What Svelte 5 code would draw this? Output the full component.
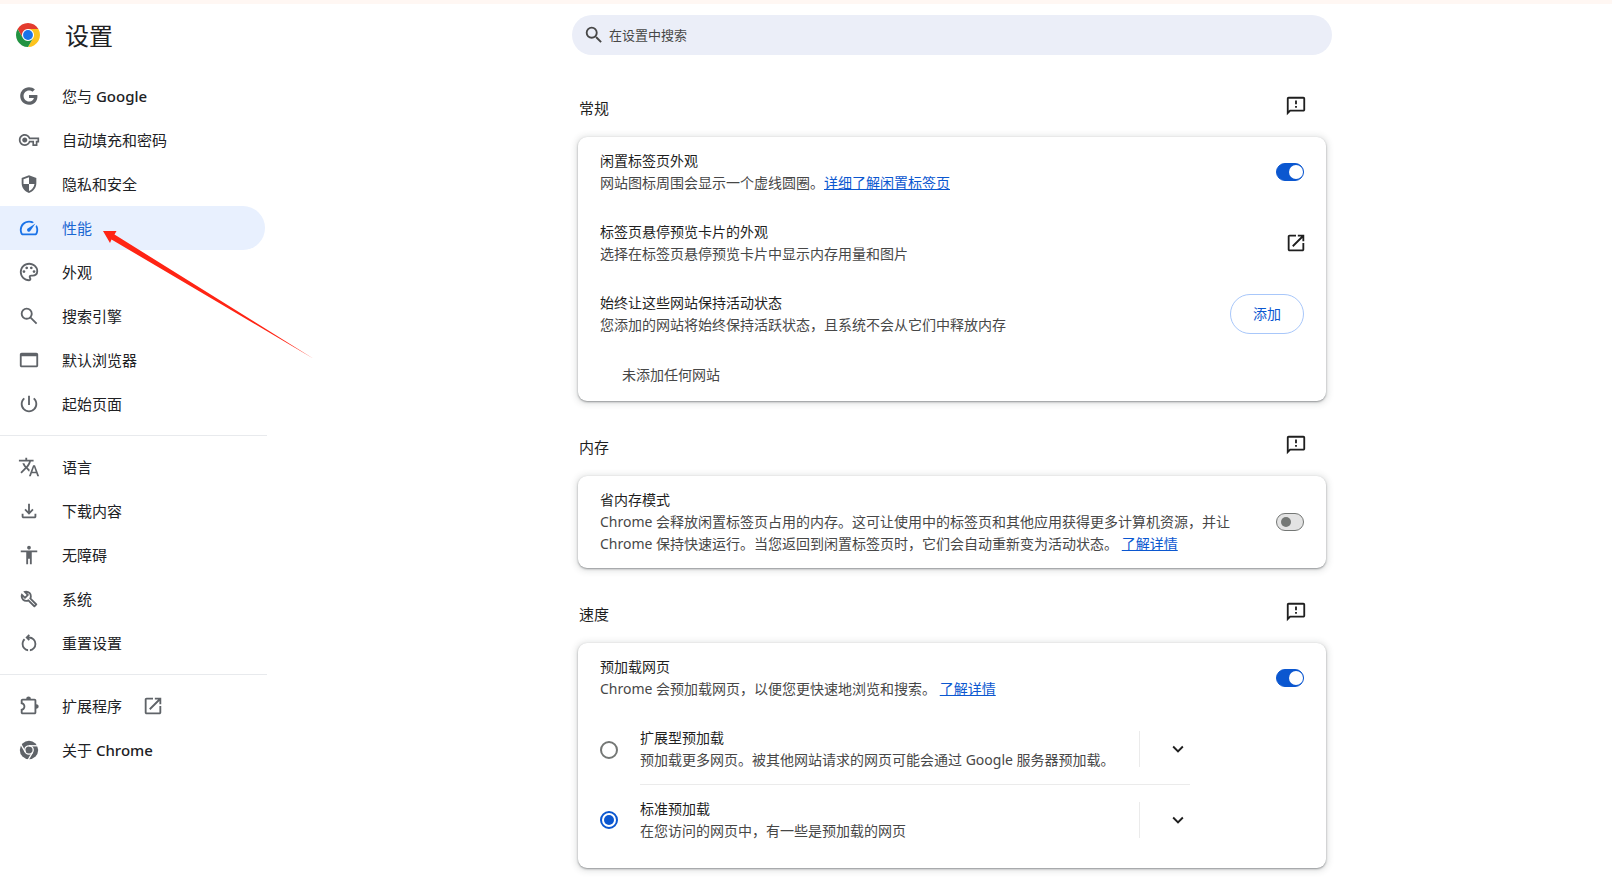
<script lang="ts">
  type NavItem = {
    id: string;
    label: string;
    product?: string;
    icon: string;
    box?: string;
    external?: boolean;
  };

  const symbols = '0 -960 960 960';

  const menu: NavItem[][] = [
    [
      {
        id: 'people',
        label: '您与',
        product: 'Google',
        box: '-1 -1 20 20',
        icon: 'M16.58 8H9v2.75h4.47c-.24 1.2-1.42 3.27-4.47 3.27-2.72 0-4.93-2.25-4.93-5.02S6.28 3.98 9 3.98c1.54 0 2.57.66 3.17 1.22l2.19-2.12C12.97 1.79 11.16 1 9 1 4.58 1 1 4.58 1 9s3.58 8 8 8c4.62 0 7.68-3.25 7.68-7.82 0-.42-.04-.8-.1-1.18z'
      },
      {
        id: 'autofill',
        label: '自动填充和密码',
        box: '-1 -1 26 26',
        icon: 'M22 19h-6v-4h-2.68c-1.14 2.42-3.6 4-6.32 4-3.86 0-7-3.14-7-7s3.14-7 7-7c2.72 0 5.17 1.58 6.32 4H24v6h-2v4zm-4-2h2v-4h2v-2H11.94l-.23-.67C11.01 8.34 9.11 7 7 7c-2.76 0-5 2.24-5 5s2.24 5 5 5c2.11 0 4.01-1.34 4.71-3.33l.23-.67H18v4zM7 15c-1.65 0-3-1.35-3-3s1.35-3 3-3 3 1.35 3 3-1.35 3-3 3z'
      },
      {
        id: 'privacy',
        label: '隐私和安全',
        box: '0 0 24 24',
        icon: 'M12 2.5L4 5.4v5.8c0 4.9 3.4 9.3 8 10.5 4.6-1.2 8-5.6 8-10.5V5.4l-8-2.9zm0 9.5h6c-.5 3.5-2.8 6.5-6 7.6V12H6V6.8l6-2.2V12z'
      },
      {
        id: 'performance',
        label: '性能',
        icon: 'M418-340q24 24 62 23.5t56-27.5l224-336-336 224q-27 18-28.5 55t22.5 61Zm62-460q59 0 113.5 16.5T696-734l-76 48q-33-17-68.5-25.5T480-720q-133 0-226.5 93.5T160-400q0 42 11.5 83t32.5 77h552q23-38 33.5-79t10.5-85q0-36-8.5-70T766-540l48-76q30 47 47.5 100T880-406q1 57-13 109t-41 99q-11 18-30 28t-40 10H204q-21 0-40-10t-30-28q-26-45-40-95.5T80-400q0-83 31.5-155.5t86-127Q252-737 325-768.5T480-800Z'
      },
      {
        id: 'appearance',
        label: '外观',
        icon: 'M480-80q-82 0-155-31.5t-127.5-86Q143-252 111.5-325T80-480q0-83 32.5-156t88-127Q256-817 330-848.5T488-880q80 0 151 27.5t124.5 76q53.5 48.5 85 115T880-518q0 115-70 176.5T640-280h-74q-9 0-12.5 5t-3.5 11q0 12 15 34.5t15 51.5q0 50-27.5 74T480-80Zm-220-360q26 0 43-17t17-43q0-26-17-43t-43-17q-26 0-43 17t-17 43q0 26 17 43t43 17Zm120-160q26 0 43-17t17-43q0-26-17-43t-43-17q-26 0-43 17t-17 43q0 26 17 43t43 17Zm200 0q26 0 43-17t17-43q0-26-17-43t-43-17q-26 0-43 17t-17 43q0 26 17 43t43 17Zm120 160q26 0 43-17t17-43q0-26-17-43t-43-17q-26 0-43 17t-17 43q0 26 17 43t43 17ZM480-160q9 0 14.5-5t5.5-13q0-14-15-33t-15-57q0-42 29-67t71-25h70q66 0 113-38.5T800-518q0-121-92.5-201.5T488-800q-136 0-232 93t-96 227q0 133 93.5 226.5T480-160Z'
      },
      {
        id: 'search',
        label: '搜索引擎',
        icon: 'M784-120 532-372q-30 24-69 38t-83 14q-109 0-184.5-75.5T120-580q0-109 75.5-184.5T380-840q109 0 184.5 75.5T640-580q0 44-14 83t-38 69l252 252-56 56ZM380-400q75 0 127.5-52.5T560-580q0-75-52.5-127.5T380-760q-75 0-127.5 52.5T200-580q0 75 52.5 127.5T380-400Z'
      },
      {
        id: 'defaultBrowser',
        label: '默认浏览器',
        icon: 'M160-160q-33 0-56.5-23.5T80-240v-480q0-33 23.5-56.5T160-800h640q33 0 56.5 23.5T880-720v480q0 33-23.5 56.5T800-160H160Zm0-80h640v-400H160v400Z'
      },
      {
        id: 'onStartup',
        label: '起始页面',
        icon: 'M440-440v-400h80v400h-80Zm40 320q-74 0-139.5-28.5T226-226q-49-49-77.5-114.5T120-480q0-80 33-151t93-123l56 56q-48 40-75 97t-27 121q0 116 82 198t198 82q117 0 198.5-82T760-480q0-64-26.5-121T658-698l56-56q60 52 93 123t33 151q0 74-28.5 139.5t-77 114.5q-48.5 49-114 77.5T480-120Z'
      }
    ],
    [
      {
        id: 'languages',
        label: '语言',
        icon: 'm476-80 182-480h84L924-80h-84l-43-122H603L560-80h-84ZM160-200l-56-56 202-202q-35-35-63.5-80T190-640h84q20 39 40 68t48 58q33-33 68.5-92.5T484-720H40v-80h280v-80h80v80h280v80H564q-21 72-63 148t-83 116l96 98-30 82-122-125-202 201Zm468-72h144l-72-204-72 204Z'
      },
      {
        id: 'downloads',
        label: '下载内容',
        icon: 'M480-320 280-520l56-58 104 104v-326h80v326l104-104 56 58-200 200ZM240-160q-33 0-56.5-23.5T160-240v-120h80v120h480v-120h80v120q0 33-23.5 56.5T720-160H240Z'
      },
      {
        id: 'accessibility',
        label: '无障碍',
        icon: 'M480-720q-33 0-56.5-23.5T400-800q0-33 23.5-56.5T480-880q33 0 56.5 23.5T560-800q0 33-23.5 56.5T480-720ZM360-80v-520H120v-80h720v80H600v520h-80v-240h-80v240h-80Z'
      },
      {
        id: 'system',
        label: '系统',
        icon: 'M686-132 444-376q-20 8-40.5 12t-43.5 4q-100 0-170-70t-70-170q0-36 10-68.5t28-61.5l146 146 72-72-146-146q29-18 61.5-28t68.5-10q100 0 170 70t70 170q0 23-4 43.5T584-516l244 242q12 12 12 29t-12 29l-84 84q-12 12-29 12t-29-12Zm29-85 27-27-256-256q18-20 26-46.5t8-53.5q0-60-38.5-104.5T386-758l74 74q12 12 12 28t-12 28L332-500q-12 12-28 12t-28-12l-74-74q9 57 53.5 95.5T360-440q26 0 52-8t47-25l256 256Z'
      },
      {
        id: 'reset',
        label: '重置设置',
        icon: 'M440-122q-121-15-200.5-105.5T160-440q0-66 26-126.5T260-672l57 57q-38 34-57.5 79T240-440q0 88 56 155.5T440-202v80Zm80 0v-80q87-16 143.5-83T720-440q0-100-70-170t-170-70h-3l44 44-56 56-140-140 140-140 56 56-44 44h3q134 0 227 93t93 227q0 121-79.5 211.5T520-122Z'
      }
    ],
    [
      {
        id: 'extensions',
        label: '扩展程序',
        external: true,
        icon: 'M200-120q-33 0-56.5-23.5T120-200v-152q48 0 84-30.5t36-77.5q0-47-36-77.5T120-568v-152q0-33 23.5-56.5T200-800h160q0-42 29-71t71-29q42 0 71 29t29 71h160q33 0 56.5 23.5T800-720v160q42 0 71 29t29 71q0 42-29 71t-71 29v160q0 33-23.5 56.5T720-120H200Zm0-80h520v-520H200v88q54 20 87 66.5T320-460q0 60-33 106t-87 66v88Z'
      },
      { id: 'help', label: '关于', product: 'Chrome', icon: '' }
    ]
  ];

  const preloadOptions = [
    {
      value: 'extended',
      title: '扩展型预加载',
      text: '预加载更多网页。被其他网站请求的网页可能会通过 Google 服务器预加载。'
    },
    {
      value: 'standard',
      title: '标准预加载',
      text: '在您访问的网页中，有一些是预加载的网页'
    }
  ];

  let selected = $state('performance');
  let discardRing = $state(true);
  let memorySaver = $state(false);
  let preload = $state(true);
  let preloadMode = $state('standard');
</script>

{#snippet openIcon()}
  <svg class="icon" viewBox="0 0 24 24" aria-hidden="true">
    <path d="M19 19H5V5h7V3H5c-1.11 0-2 .9-2 2v14c0 1.1.89 2 2 2h14c1.1 0 2-.9 2-2v-7h-2v7zM14 3v2h3.59l-9.83 9.83 1.41 1.41L19 6.41V10h2V3h-7z" />
  </svg>
{/snippet}

{#snippet sectionHeader(title: string)}
  <div class="section-header">
    <h2>{title}</h2>
    <button class="icon-button" aria-label="发送反馈">
      <svg class="icon" viewBox="0 0 24 24" aria-hidden="true">
        <path d="M20 2H4c-1.1 0-1.99.9-1.99 2L2 22l4-4h14c1.1 0 2-.9 2-2V4c0-1.1-.9-2-2-2zm0 14H5.17L4 17.17V4h16v12zm-9-4h2v2h-2zm0-6h2v4h-2z" />
      </svg>
    </button>
  </div>
{/snippet}

<div class="page">
  <aside class="sidebar">
    <div class="brand">
      <svg class="logo" viewBox="2 2 44 44" aria-hidden="true">
        <circle cx="24" cy="24" r="12" fill="#fff" />
        <path fill="#e33b2e" d="M24 13H43.05A22 22 0 0 0 4.95 13L14.47 29.5A11 11 0 0 1 24 13z" />
        <path fill="#fcc31e" d="M33.53 29.5L24 46A22 22 0 0 0 43.05 13H24A11 11 0 0 1 33.53 29.5z" />
        <path fill="#229342" d="M14.47 29.5L4.95 13A22 22 0 0 0 24 46L33.53 29.5A11 11 0 0 1 14.47 29.5z" />
        <circle cx="24" cy="24" r="9" fill="#1a73e8" />
      </svg>
      <h1>设置</h1>
    </div>

    <nav>
      {#each menu as group}
        <ul>
          {#each group as item}
            <li>
              <a
                href="#{item.id}"
                class:selected={selected === item.id}
                onclick={() => (selected = item.id)}
              >
                {#if item.id === 'help'}
                  <svg class="icon" viewBox="0 0 24 24" aria-hidden="true">
                    <circle cx="12" cy="12" r="10" />
                    <circle cx="12" cy="12" r="4.6" fill="none" stroke="#fff" stroke-width="1.4" />
                    <g stroke="#fff" stroke-width="1.4">
                      <path d="M12 7.4H22" />
                      <path d="M12 7.4H22" transform="rotate(120 12 12)" />
                      <path d="M12 7.4H22" transform="rotate(240 12 12)" />
                    </g>
                  </svg>
                {:else}
                  <svg class="icon" viewBox={item.box ?? symbols} aria-hidden="true">
                    <path d={item.icon} />
                  </svg>
                {/if}
                <span class="label">
                  {item.label}
                  {#if item.product}<b>{item.product}</b>{/if}
                </span>
                {#if item.external}
                  {@render openIcon()}
                {/if}
              </a>
            </li>
          {/each}
        </ul>
      {/each}
    </nav>

    <svg class="pointer" viewBox="0 0 212 130" aria-hidden="true">
      <path d="M0 0L13.5 0L11.5 3.5L211 128L8.5 8.5L7 12z" />
    </svg>
  </aside>

  <main>
    <label class="search">
      <svg class="icon" viewBox="0 0 24 24" aria-hidden="true">
        <path d="M15.5 14h-.79l-.28-.27A6.471 6.471 0 0 0 16 9.5 6.5 6.5 0 1 0 9.5 16c1.61 0 3.09-.59 4.23-1.57l.27.28v.79l5 4.99L20.49 19l-4.99-5zm-6 0C7.01 14 5 11.99 5 9.5S7.01 5 9.5 5 14 7.01 14 9.5 11.99 14 9.5 14z" />
      </svg>
      <input type="search" placeholder="在设置中搜索" aria-label="在设置中搜索" />
    </label>

    <div class="content">
      <section>
        {@render sectionHeader('常规')}
        <div class="card">
          <div class="row">
            <div class="text">
              <label class="title" for="discard-ring">闲置标签页外观</label>
              <p>网站图标周围会显示一个虚线圆圈。<a href="#inactive-tabs">详细了解闲置标签页</a></p>
            </div>
            <input id="discard-ring" class="toggle" type="checkbox" bind:checked={discardRing} />
          </div>
          <div class="row">
            <div class="text">
              <div class="title">标签页悬停预览卡片的外观</div>
              <p>选择在标签页悬停预览卡片中显示内存用量和图片</p>
            </div>
            <button class="icon-button row-icon" aria-label="标签页悬停预览卡片的外观">
              {@render openIcon()}
            </button>
          </div>
          <div class="row">
            <div class="text">
              <div class="title">始终让这些网站保持活动状态</div>
              <p>您添加的网站将始终保持活跃状态，且系统不会从它们中释放内存</p>
            </div>
            <button class="add">添加</button>
          </div>
          <p class="empty">未添加任何网站</p>
        </div>
      </section>

      <section>
        {@render sectionHeader('内存')}
        <div class="card">
          <div class="row">
            <div class="text">
              <label class="title" for="memory-saver">省内存模式</label>
              <p>
                Chrome 会释放闲置标签页占用的内存。这可让使用中的标签页和其他应用获得更多计算机资源，并让
                Chrome 保持快速运行。当您返回到闲置标签页时，它们会自动重新变为活动状态。
                <a href="#memory-saver-help">了解详情</a>
              </p>
            </div>
            <input id="memory-saver" class="toggle" type="checkbox" bind:checked={memorySaver} />
          </div>
        </div>
      </section>

      <section>
        {@render sectionHeader('速度')}
        <div class="card">
          <div class="row">
            <div class="text">
              <label class="title" for="preload">预加载网页</label>
              <p>
                Chrome 会预加载网页，以便您更快速地浏览和搜索。
                <a href="#preload-help">了解详情</a>
              </p>
            </div>
            <input id="preload" class="toggle" type="checkbox" bind:checked={preload} />
          </div>
          <div class="options">
            {#each preloadOptions as option}
              <div class="option">
                <input
                  id="preload-{option.value}"
                  class="radio"
                  type="radio"
                  name="preload-mode"
                  value={option.value}
                  bind:group={preloadMode}
                />
                <div class="option-body">
                  <label class="text" for="preload-{option.value}">
                    <span class="title">{option.title}</span>
                    <span class="detail">{option.text}</span>
                  </label>
                  <div class="expand">
                    <button class="icon-button" aria-label="展开 {option.title}">
                      <svg class="icon" viewBox="0 0 24 24" aria-hidden="true">
                        <path d="M7.41 8.59 12 13.17l4.59-4.58L18 10l-6 6-6-6z" />
                      </svg>
                    </button>
                  </div>
                </div>
              </div>
            {/each}
          </div>
        </div>
      </section>
    </div>
  </main>
</div>

<style>
  :global(body) {
    background: #fff;
  }

  .page {
    display: flex;
    box-sizing: border-box;
    min-height: 100vh;
    border-top: 4px solid #fff7f3;
    font-family: 'Noto Sans', 'Noto Sans CJK SC', sans-serif;
    font-size: 14px;
    line-height: 22px;
    color: #1f1f1f;
  }

  h1,
  h2,
  p,
  ul {
    margin: 0;
    padding: 0;
    font-weight: 400;
  }

  .icon {
    flex: none;
    display: block;
    width: 22px;
    height: 22px;
    fill: currentColor;
  }

  .sidebar {
    position: relative;
    flex: none;
    width: 292px;
  }

  .brand {
    display: flex;
    align-items: center;
    gap: 25px;
    height: 62px;
    padding: 0 16px 8px;
  }

  .logo {
    width: 24px;
    height: 24px;
  }

  h1 {
    padding-top: 2px;
    font-size: 24px;
    line-height: 32px;
    color: #202124;
  }

  nav {
    width: 267px;
  }

  ul {
    list-style: none;
  }

  ul + ul {
    margin-top: 9px;
    padding-top: 9px;
    border-top: 1px solid #e8eaed;
  }

  nav a {
    display: flex;
    align-items: center;
    gap: 20px;
    height: 44px;
    margin-right: 2px;
    padding-left: 18px;
    border-radius: 0 22px 22px 0;
    font-size: 15px;
    color: #202124;
    text-decoration: none;
  }

  .label {
    padding-left: 2px;
  }

  .label b {
    font-weight: 500;
  }

  nav a .icon {
    color: #5f6368;
  }

  nav a.selected {
    background: #e8f0fe;
    color: #1967d2;
  }

  nav a.selected .icon {
    color: #1a73e8;
  }

  /* red arrow drawn over the menu */
  .pointer {
    position: absolute;
    left: 103px;
    top: 227px;
    width: 212px;
    height: 130px;
    fill: #ff2414;
    pointer-events: none;
  }

  main {
    flex: 1;
    min-width: 0;
    padding: 11px 22px 10px;
  }

  .search {
    display: flex;
    align-items: center;
    gap: 4px;
    box-sizing: border-box;
    max-width: 760px;
    height: 40px;
    margin: 0 auto;
    padding: 0 20px 0 11px;
    border-radius: 20px;
    background: #ebeef8;
    color: #474747;
  }

  .search input {
    flex: 1;
    min-width: 0;
    padding: 0;
    border: 0;
    outline: 0;
    background: none;
    font: inherit;
    font-size: 13px;
    color: #1f1f1f;
  }

  .search input::placeholder {
    color: #474747;
    opacity: 1;
  }

  .content {
    max-width: 748px;
    margin: 0 auto;
    padding-top: 7px;
  }

  .section-header {
    display: flex;
    align-items: center;
    justify-content: space-between;
    height: 40px;
    padding: 24px 18px 11px 1px;
  }

  h2 {
    padding-top: 4px;
    font-size: 15px;
  }

  .icon-button {
    display: flex;
    align-items: center;
    justify-content: center;
    width: 24px;
    height: 24px;
    padding: 0;
    border: 0;
    background: none;
    color: #1f1f1f;
    cursor: pointer;
  }

  .card {
    border-radius: 9px;
    background: #fff;
    box-shadow:
      0 1px 2px rgba(60, 64, 67, 0.5),
      0 1px 6px 2px rgba(60, 64, 67, 0.15);
  }

  .row {
    display: flex;
    align-items: center;
    gap: 22px;
    padding: 13px 22px;
  }

  .row + .row {
    border-top: 1px solid transparent;
  }

  .text {
    flex: 1;
    min-width: 0;
  }

  .title {
    display: block;
  }

  .text p,
  .detail {
    display: block;
    color: #474747;
  }

  .text a {
    color: #0b57d0;
  }

  .row-icon {
    margin-right: -4px;
  }

  .add {
    height: 40px;
    padding: 0 22px;
    border: 1px solid #a8c7fa;
    border-radius: 20px;
    background: #fff;
    font: inherit;
    color: #0b57d0;
    cursor: pointer;
  }

  .empty {
    padding: 15px 44px;
    color: #474747;
  }

  .toggle,
  .radio {
    appearance: none;
    flex: none;
    display: flex;
    align-items: center;
    box-sizing: border-box;
    height: 18px;
    margin: 0;
    cursor: pointer;
  }

  .toggle {
    width: 28px;
    padding: 0 4px;
    border: 1px solid #747775;
    border-radius: 9px;
    background: #e3e3e3;
  }

  .toggle::before {
    content: '';
    width: 10px;
    height: 10px;
    border-radius: 50%;
    background: #747775;
  }

  .toggle:checked {
    justify-content: flex-end;
    padding: 0;
    border-color: #0b57d0;
    background: #0b57d0;
  }

  .toggle:checked::before {
    width: 14px;
    height: 14px;
    background: #fff;
  }

  .radio {
    justify-content: center;
    width: 18px;
    border: 2px solid #747775;
    border-radius: 50%;
  }

  .radio:checked {
    border-color: #0b57d0;
  }

  .radio:checked::before {
    content: '';
    width: 10px;
    height: 10px;
    border-radius: 50%;
    background: #0b57d0;
  }

  .options {
    padding: 1px 136px 13px 22px;
  }

  .option {
    display: flex;
    align-items: center;
    gap: 22px;
  }

  .option-body {
    flex: 1;
    display: flex;
    align-items: center;
    min-width: 0;
    padding: 13px 0;
  }

  .option:not(:last-child) .option-body {
    border-bottom: 1px solid #ebebeb;
  }

  .expand {
    display: flex;
    align-items: center;
    height: 36px;
    padding-left: 26px;
    border-left: 1px solid #ebebeb;
  }
</style>
